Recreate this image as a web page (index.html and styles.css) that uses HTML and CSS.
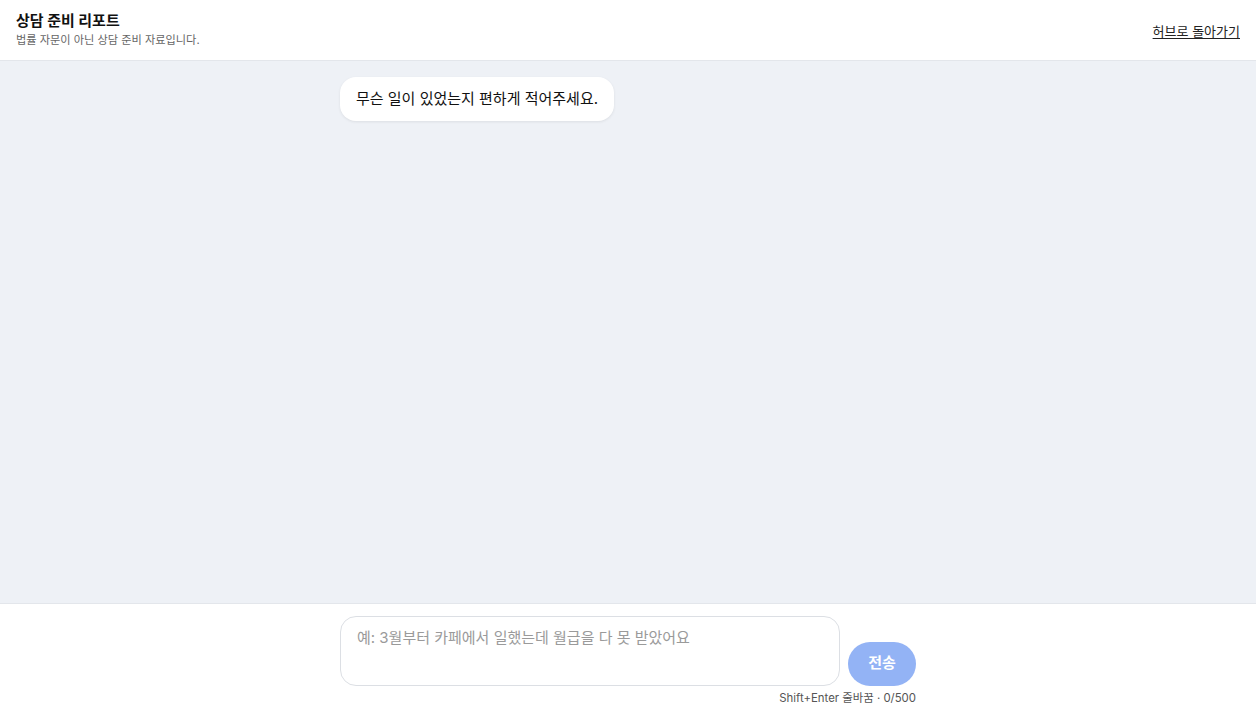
FILE: index.html
```html
<!DOCTYPE html>
<html lang="ko">
<head>
<meta charset="utf-8">
<title>상담 준비 리포트</title>
<link rel="stylesheet" href="styles.css">
</head>
<body>
<div class="app">
  <header class="top">
    <div class="brand">
      <div class="title">상담 준비 리포트</div>
      <div class="sub">법률 자문이 아닌 상담 준비 자료입니다.</div>
    </div>
    <a class="back" href="#">허브로 돌아가기</a>
  </header>
  <main class="chat">
    <div class="col">
      <div class="bubble">무슨 일이 있었는지 편하게 적어주세요.</div>
    </div>
  </main>
  <footer class="composer">
    <div class="col">
      <div class="row">
        <textarea class="input" placeholder="예: 3월부터 카페에서 일했는데 월급을 다 못 받았어요"></textarea>
        <button class="send" type="button">전송</button>
      </div>
      <div class="hint">Shift+Enter 줄바꿈 · 0/500</div>
    </div>
  </footer>
</div>
</body>
</html>
```

FILE: styles.css
```css
* { box-sizing: border-box; }
html, body { margin: 0; height: 100%; }
body {
  font-family: "Inter", "Noto Sans CJK KR", sans-serif;
  color: #111;
  background: #fff;
}
.app { display: flex; flex-direction: column; height: 100vh; }
.top {
  height: 61px;
  flex: none;
  display: flex;
  align-items: center;
  justify-content: space-between;
  padding: 0 16px;
  border-bottom: 1px solid #e3e6eb;
  background: #fff;
}
.brand { display: flex; flex-direction: column; gap: 1px; margin-top: -2px; }
.title { font-size: 15px; font-weight: 700; line-height: 20px; color: #111; }
.sub { font-size: 11.2px; line-height: 16px; color: #666; }
.back { font-size: 13px; color: #222; text-decoration: underline; text-underline-offset: 2px; }
.chat {
  flex: 1;
  background: #eef1f6;
  padding-top: 16px;
}
.col { width: 576px; margin: 0 auto; }
.bubble {
  display: inline-block;
  background: #fff;
  border-radius: 16px;
  padding: 11px 16px;
  font-size: 15px;
  line-height: 22px;
  color: #111;
  box-shadow: 0 1px 3px rgba(0,0,0,0.08);
}
.composer {
  flex: none;
  border-top: 1px solid #e3e6eb;
  background: #fff;
  padding: 12px 0 12px;
}
.row { display: flex; align-items: flex-end; gap: 8px; }
.input {
  flex: 1;
  height: 70px;
  resize: none;
  border: 1px solid #dcdfe4;
  border-radius: 16px;
  padding: 10px 16px;
  font: 15px/22px "Inter", "Noto Sans CJK KR", sans-serif;
  color: #111;
  outline: none;
}
.input::placeholder { color: #9a9a9a; }
.send {
  width: 68px;
  height: 44px;
  border: none;
  border-radius: 22px;
  background: #93b3f5;
  color: #fff;
  font: 700 15px/20px "Inter", "Noto Sans CJK KR", sans-serif;
  padding: 0 0 2px;
}
.hint {
  text-align: right;
  font-size: 11.4px;
  line-height: 16px;
  color: #555;
  margin-top: 4px;
}
```
